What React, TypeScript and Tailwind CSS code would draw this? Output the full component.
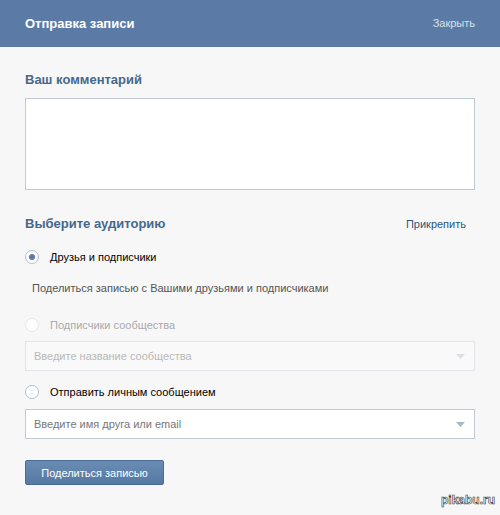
const font = { fontFamily: '"Liberation Sans", Arial, sans-serif' };

const Radio = ({ checked, disabled }: { checked?: boolean; disabled?: boolean }) => (
  <span
    className={`flex h-[14px] w-[14px] items-center justify-center rounded-full border bg-white ${
      disabled ? "border-[#e3e6ea] bg-[#f9f9f9]" : "border-[#b5c0cc]"
    }`}
  >
    {checked && <span className="h-[6px] w-[6px] rounded-full bg-[#5b7ba6]" />}
  </span>
);

const Select = ({ placeholder, disabled }: { placeholder: string; disabled?: boolean }) => (
  <div
    className={`flex h-[30px] items-center justify-between border pl-[8px] pr-[9px] text-[11px] ${
      disabled
        ? "border-[#e1e4e8] bg-[#f9f9f9] text-[#b8b8b8]"
        : "border-[#c0cad5] bg-white text-[#777]"
    }`}
  >
    <span>{placeholder}</span>
    <svg width="9" height="5" viewBox="0 0 9 5">
      <path d="M0 0h9L4.5 5z" fill={disabled ? "#dcdfe4" : "#aeb5c0"} />
    </svg>
  </div>
);

export default function App() {
  return (
    <div className="relative h-[515px] w-[500px] bg-[#f7f7f7]" style={font}>
      <div className="flex h-[47px] items-center justify-between bg-[#5b7ba6] px-[25px]">
        <span className="text-[13px] font-bold text-white">Отправка записи</span>
        <span className="text-[11px] text-[#d6e0eb]">Закрыть</span>
      </div>

      <div className="flex flex-col px-[25px] pt-[25px] text-[11px] leading-[16px]">
        <div className="text-[13px] font-bold text-[#45688e]">Ваш комментарий</div>
        <div className="mt-[10px] h-[92px] border border-[#c0cad5] bg-white" />

        <div className="mt-[26px] flex items-center justify-between pr-[9px]">
          <span className="text-[13px] font-bold text-[#45688e]">Выберите аудиторию</span>
          <span className="text-[#2b587a]">Прикрепить</span>
        </div>

        <div className="mt-[17px] flex items-center gap-[11px] text-[#000]">
          <Radio checked />
          <span>Друзья и подписчики</span>
        </div>

        <div className="mt-[15px] pl-[7px] text-[#555]">
          Поделиться записью с Вашими друзьями и подписчиками
        </div>

        <div className="mt-[21px] flex items-center gap-[11px] text-[#aaa]">
          <Radio disabled />
          <span>Подписчики сообщества</span>
        </div>

        <div className="mt-[8px]">
          <Select placeholder="Введите название сообщества" disabled />
        </div>

        <div className="mt-[13px] flex items-center gap-[11px] text-[#000]">
          <Radio />
          <span>Отправить личным сообщением</span>
        </div>

        <div className="mt-[9px]">
          <Select placeholder="Введите имя друга или email" />
        </div>

        <div className="mt-[21px]">
          <button className="h-[25px] w-[139px] rounded-[2px] border border-[#4a6c96] bg-gradient-to-b from-[#6a8cb4] to-[#5579a3] text-[11px] text-white">
            Поделиться записью
          </button>
        </div>
      </div>

      <span className="absolute bottom-[6px] right-[5px] text-[12px] font-bold text-white [-webkit-text-stroke:0.6px_#333]">
        pikabu.ru
      </span>
    </div>
  );
}
